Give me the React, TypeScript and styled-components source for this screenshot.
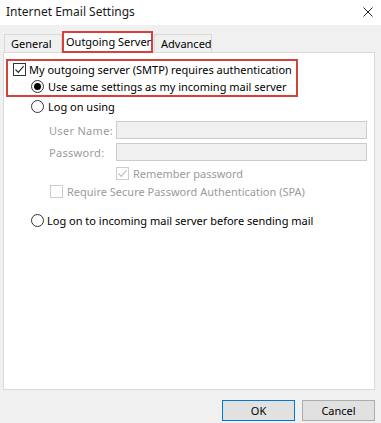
import React from "react";
import styled, { createGlobalStyle, css } from "styled-components";

const GlobalStyle = createGlobalStyle`
  html, body { margin: 0; padding: 0; background: #f0f0f0; }
  body { font-family: "Noto Sans", "Liberation Sans", sans-serif; font-size: 11px; color: #000; }
  * { box-sizing: border-box; }
`;

const RED = "#d5413b";

const Window = styled.div`
  width: 381px;
  height: 423px;
  display: flex;
  flex-direction: column;
  background: #f0f0f0;
  overflow: hidden;
`;

const TitleBar = styled.div`
  height: 25px;
  flex: none;
  background: #ffffff;
  display: flex;
  align-items: center;
  justify-content: space-between;
  padding: 0 8px 2px 6px;
`;

const Title = styled.span`
  font-size: 12px;
  color: #1a1a1a;
`;

const CloseButton = styled.span`
  display: flex;
  width: 10px;
  height: 10px;
`;

const TabStrip = styled.div`
  flex: none;
  display: flex;
  align-items: flex-end;
  height: 27px;
  padding-left: 4px;
  position: relative;
  z-index: 1;
`;

const Tab = styled.div<{ $active?: boolean; $width: number }>`
  width: ${(p) => p.$width}px;
  height: 18px;
  border: 1px solid #d9d9d9;
  border-bottom: none;
  background: #f0f0f0;
  display: flex;
  align-items: center;
  padding-left: 6px;
  margin-right: -1px;
  white-space: nowrap;
  ${(p) =>
    p.$active &&
    css`
      height: 22px;
      margin-bottom: -1px;
      background: #ffffff;
      border: 2px solid ${RED};
      border-bottom: 2px solid ${RED};
      padding-left: 2px;
      padding-bottom: 1px;
      margin-left: 1px;
      margin-right: 1px;
      position: relative;
      z-index: 2;
    `}
`;

const Panel = styled.div`
  flex: none;
  height: 338px;
  margin: 0 6px 0 3px;
  background: #ffffff;
  border: 1px solid #d9d9d9;
  display: flex;
  flex-direction: column;
  padding-top: 6px;
`;

const Highlight = styled.div`
  margin-left: 2px;
  width: 292px;
  border: 2px solid ${RED};
  display: flex;
  flex-direction: column;
`;

const Row = styled.label<{ $indent: number; $h?: number; $mt?: number; $gap?: number; $disabled?: boolean }>`
  display: flex;
  align-items: center;
  height: ${(p) => p.$h ?? 17}px;
  padding-left: ${(p) => p.$indent}px;
  margin-top: ${(p) => p.$mt ?? 0}px;
  gap: ${(p) => p.$gap ?? 4}px;
  color: ${(p) => (p.$disabled ? "#9b9b9b" : "#000")};
  white-space: nowrap;
`;

const CheckBox = styled.span<{ $disabled?: boolean }>`
  width: 13px;
  height: 13px;
  flex: none;
  border: 1px solid ${(p) => (p.$disabled ? "#cccccc" : "#333333")};
  background: #ffffff;
  display: flex;
  align-items: center;
  justify-content: center;
`;

const Radio = styled.span<{ $checked?: boolean }>`
  width: 13px;
  height: 13px;
  flex: none;
  border-radius: 50%;
  border: 1px solid #333333;
  background: #ffffff;
  display: flex;
  align-items: center;
  justify-content: center;
  &::after {
    content: "";
    width: 7px;
    height: 7px;
    border-radius: 50%;
    background: ${(p) => (p.$checked ? "#000" : "transparent")};
  }
`;

const FieldGrid = styled.div`
  display: grid;
  grid-template-columns: 67px 251px;
  row-gap: 4px;
  padding-left: 45px;
  margin-top: 6px;
  align-items: center;
`;

const FieldLabel = styled.span`
  color: #9b9b9b;
  letter-spacing: 0.3px;
`;

const FieldInput = styled.div`
  height: 18px;
  background: #f0f0f0;
  border: 1px solid #cccccc;
`;

const Footer = styled.div`
  flex: 1;
  display: flex;
  justify-content: flex-end;
  align-items: flex-start;
  gap: 7px;
  padding: 10px 6px 0 0;
`;

const Button = styled.button<{ $default?: boolean }>`
  width: 73px;
  height: 21px;
  font-family: inherit;
  font-size: 11px;
  color: #000;
  background: #e1e1e1;
  border: 1px solid ${(p) => (p.$default ? "#0078d7" : "#adadad")};
  padding: 0;
  padding-bottom: 1px;
`;

const Check = ({ color }: { color: string }) => (
  <svg width="11" height="11" viewBox="0 0 11 11">
    <path d="M1.5 5.5 L4.3 8.4 L9.6 2.2" fill="none" stroke={color} strokeWidth="1.1" />
  </svg>
);

export default function App() {
  return (
    <>
      <GlobalStyle />
      <Window>
        <TitleBar>
          <Title>Internet Email Settings</Title>
          <CloseButton>
            <svg width="10" height="10" viewBox="0 0 10 10">
              <path d="M0.5 0.5 L9.5 9.5 M9.5 0.5 L0.5 9.5" stroke="#222" strokeWidth="1" />
            </svg>
          </CloseButton>
        </TitleBar>
        <TabStrip>
          <Tab $width={58}>General</Tab>
          <Tab $width={91} $active>Outgoing Server</Tab>
          <Tab $width={58}>Advanced</Tab>
        </TabStrip>
        <Panel>
          <Highlight>
            <Row $indent={5} $gap={3}>
              <CheckBox>
                <Check color="#222" />
              </CheckBox>
              My outgoing server (SMTP) requires authentication
            </Row>
            <Row $indent={23}>
              <Radio $checked />
              Use same settings as my incoming mail server
            </Row>
          </Highlight>
          <Row $indent={27} $h={18}>
            <Radio />
            Log on using
          </Row>
          <FieldGrid>
            <FieldLabel>User Name:</FieldLabel>
            <FieldInput />
            <FieldLabel>Password:</FieldLabel>
            <FieldInput />
          </FieldGrid>
          <Row $indent={112} $h={18} $mt={3} $disabled>
            <CheckBox $disabled>
              <Check color="#bdbdbd" />
            </CheckBox>
            Remember password
          </Row>
          <Row $indent={46} $h={18} $mt={0} $disabled>
            <CheckBox $disabled />
            Require Secure Password Authentication (SPA)
          </Row>
          <Row $indent={27} $h={18} $mt={11} $gap={3}>
            <Radio />
            Log on to incoming mail server before sending mail
          </Row>
        </Panel>
        <Footer>
          <Button $default>OK</Button>
          <Button>Cancel</Button>
        </Footer>
      </Window>
    </>
  );
}
